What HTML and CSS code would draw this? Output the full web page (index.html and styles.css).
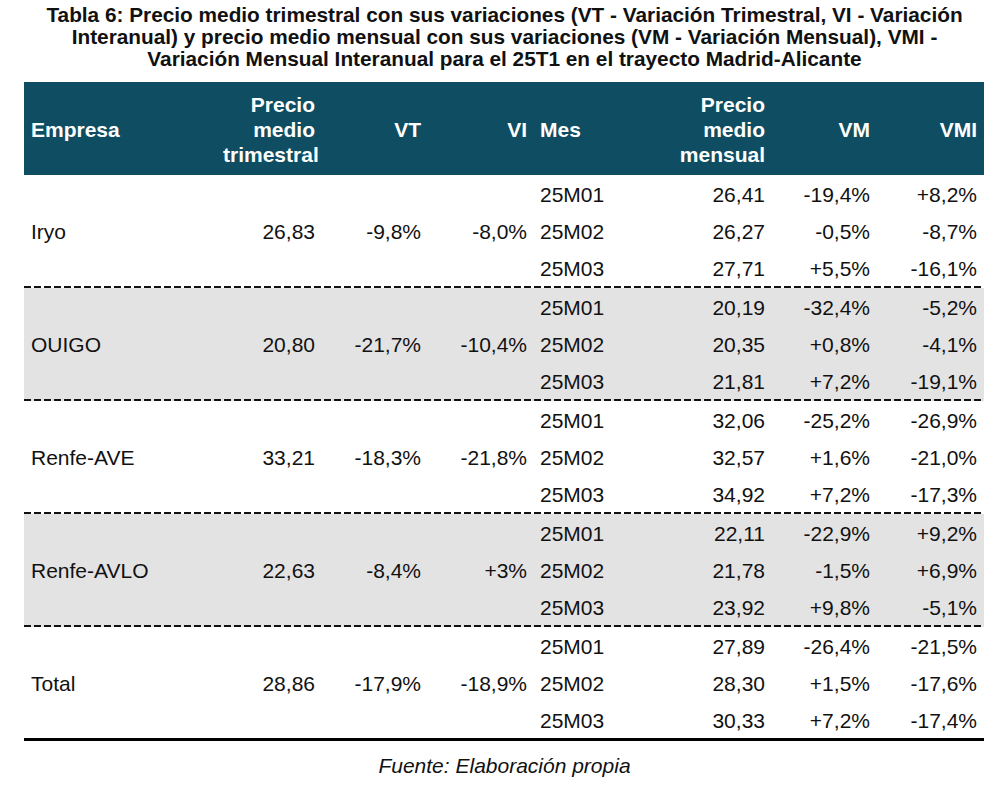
FILE: index.html
```html
<!DOCTYPE html>
<html lang="es">
<head>
<meta charset="utf-8">
<title>Tabla 6</title>
<link rel="stylesheet" href="styles.css">
</head>
<body>
<div class="page">
  <h1 class="title">Tabla 6: Precio medio trimestral con sus variaciones (VT - Variación Trimestral, VI - Variación<br>Interanual) y precio medio mensual con sus variaciones (VM - Variación Mensual), VMI -<br>Variación Mensual Interanual para el 25T1 en el trayecto Madrid-Alicante</h1>
  <table class="data">
    <colgroup>
      <col class="c-emp"><col class="c-pmt"><col class="c-vt"><col class="c-vi"><col class="c-mes"><col class="c-pmm"><col class="c-vm"><col class="c-vmi">
    </colgroup>
    <thead>
      <tr>
        <th class="l">Empresa</th>
        <th class="r">Precio<br>medio<br>trimestral</th>
        <th class="r">VT</th>
        <th class="r vi">VI</th>
        <th class="l mes">Mes</th>
        <th class="r">Precio<br>medio<br>mensual</th>
        <th class="r">VM</th>
        <th class="r">VMI</th>
      </tr>
    </thead>
    <tbody class="grp">
      <tr><td rowspan="3" class="l">Iryo</td><td rowspan="3" class="r">26,83</td><td rowspan="3" class="r">-9,8%</td><td rowspan="3" class="r vi">-8,0%</td><td class="l mes">25M01</td><td class="r">26,41</td><td class="r">-19,4%</td><td class="r">+8,2%</td></tr>
      <tr><td class="l mes">25M02</td><td class="r">26,27</td><td class="r">-0,5%</td><td class="r">-8,7%</td></tr>
      <tr><td class="l mes">25M03</td><td class="r">27,71</td><td class="r">+5,5%</td><td class="r">-16,1%</td></tr>
      <tr class="sep"><td colspan="8"></td></tr>
    </tbody>
    <tbody class="grp shaded">
      <tr><td rowspan="3" class="l">OUIGO</td><td rowspan="3" class="r">20,80</td><td rowspan="3" class="r">-21,7%</td><td rowspan="3" class="r vi">-10,4%</td><td class="l mes">25M01</td><td class="r">20,19</td><td class="r">-32,4%</td><td class="r">-5,2%</td></tr>
      <tr><td class="l mes">25M02</td><td class="r">20,35</td><td class="r">+0,8%</td><td class="r">-4,1%</td></tr>
      <tr><td class="l mes">25M03</td><td class="r">21,81</td><td class="r">+7,2%</td><td class="r">-19,1%</td></tr>
      <tr class="sep"><td colspan="8"></td></tr>
    </tbody>
    <tbody class="grp">
      <tr><td rowspan="3" class="l">Renfe-AVE</td><td rowspan="3" class="r">33,21</td><td rowspan="3" class="r">-18,3%</td><td rowspan="3" class="r vi">-21,8%</td><td class="l mes">25M01</td><td class="r">32,06</td><td class="r">-25,2%</td><td class="r">-26,9%</td></tr>
      <tr><td class="l mes">25M02</td><td class="r">32,57</td><td class="r">+1,6%</td><td class="r">-21,0%</td></tr>
      <tr><td class="l mes">25M03</td><td class="r">34,92</td><td class="r">+7,2%</td><td class="r">-17,3%</td></tr>
      <tr class="sep"><td colspan="8"></td></tr>
    </tbody>
    <tbody class="grp shaded">
      <tr><td rowspan="3" class="l">Renfe-AVLO</td><td rowspan="3" class="r">22,63</td><td rowspan="3" class="r">-8,4%</td><td rowspan="3" class="r vi">+3%</td><td class="l mes">25M01</td><td class="r">22,11</td><td class="r">-22,9%</td><td class="r">+9,2%</td></tr>
      <tr><td class="l mes">25M02</td><td class="r">21,78</td><td class="r">-1,5%</td><td class="r">+6,9%</td></tr>
      <tr><td class="l mes">25M03</td><td class="r">23,92</td><td class="r">+9,8%</td><td class="r">-5,1%</td></tr>
      <tr class="sep"><td colspan="8"></td></tr>
    </tbody>
    <tbody class="grp">
      <tr><td rowspan="3" class="l">Total</td><td rowspan="3" class="r">28,86</td><td rowspan="3" class="r">-17,9%</td><td rowspan="3" class="r vi">-18,9%</td><td class="l mes">25M01</td><td class="r">27,89</td><td class="r">-26,4%</td><td class="r">-21,5%</td></tr>
      <tr><td class="l mes">25M02</td><td class="r">28,30</td><td class="r">+1,5%</td><td class="r">-17,6%</td></tr>
      <tr><td class="l mes">25M03</td><td class="r">30,33</td><td class="r">+7,2%</td><td class="r">-17,4%</td></tr>
      <tr class="end"><td colspan="8"></td></tr>
    </tbody>
  </table>
  <p class="source">Fuente: Elaboración propia</p>
</div>
</body>
</html>
```
FILE: styles.css
```css
html, body {
  margin: 0;
  padding: 0;
  background: #ffffff;
}
body {
  font-family: "Liberation Sans", Arial, sans-serif;
  color: #111111;
}
.page {
  width: 1001px;
  padding: 4px 0 0 0;
}
.title {
  margin: 0 0 12px 0;
  font-size: 20.8px;
  line-height: 22px;
  font-weight: bold;
  text-align: center;
  color: #111111;
  padding-left: 8px;
}
.data {
  margin-left: 24px;
  width: 960px;
  border-collapse: collapse;
  table-layout: fixed;
  font-size: 21px;
}
.c-emp { width: 192px; }
.c-pmt { width: 106px; }
.c-vt { width: 106px; }
.c-vi { width: 106px; }
.c-mes { width: 132px; }
.c-pmm { width: 106px; }
.c-vm { width: 105px; }
.c-vmi { width: 107px; }

.data thead th {
  background: #0e4d62;
  color: #ffffff;
  font-weight: bold;
  line-height: 25px;
  padding: 10px 7px 8px 7px;
  vertical-align: middle;
}
.data td {
  height: 34px;
  padding: 3px 7px 0 7px;
  line-height: 24px;
  vertical-align: middle;
  white-space: nowrap;
}
.l { text-align: left; }
.r { text-align: right; }
.data .vi { padding-right: 7px; }
.data .mes { padding-left: 6px; }
.shaded td { background: #e4e3e4; }
.data tr.sep td {
  height: 2px;
  padding: 0;
  background: repeating-linear-gradient(90deg, #111111 0 7px, transparent 7px 10px);
}
.shaded tr.sep td {
  background: repeating-linear-gradient(90deg, #111111 0 7px, #e4e3e4 7px 10px);
}
.data tr.end td {
  height: 3px;
  padding: 0;
  background: #000000;
}
.source {
  margin: 13px 0 0 0;
  text-align: center;
  font-style: italic;
  font-size: 21px;
  line-height: 24px;
  color: #111111;
  padding-left: 8px;
}
```
